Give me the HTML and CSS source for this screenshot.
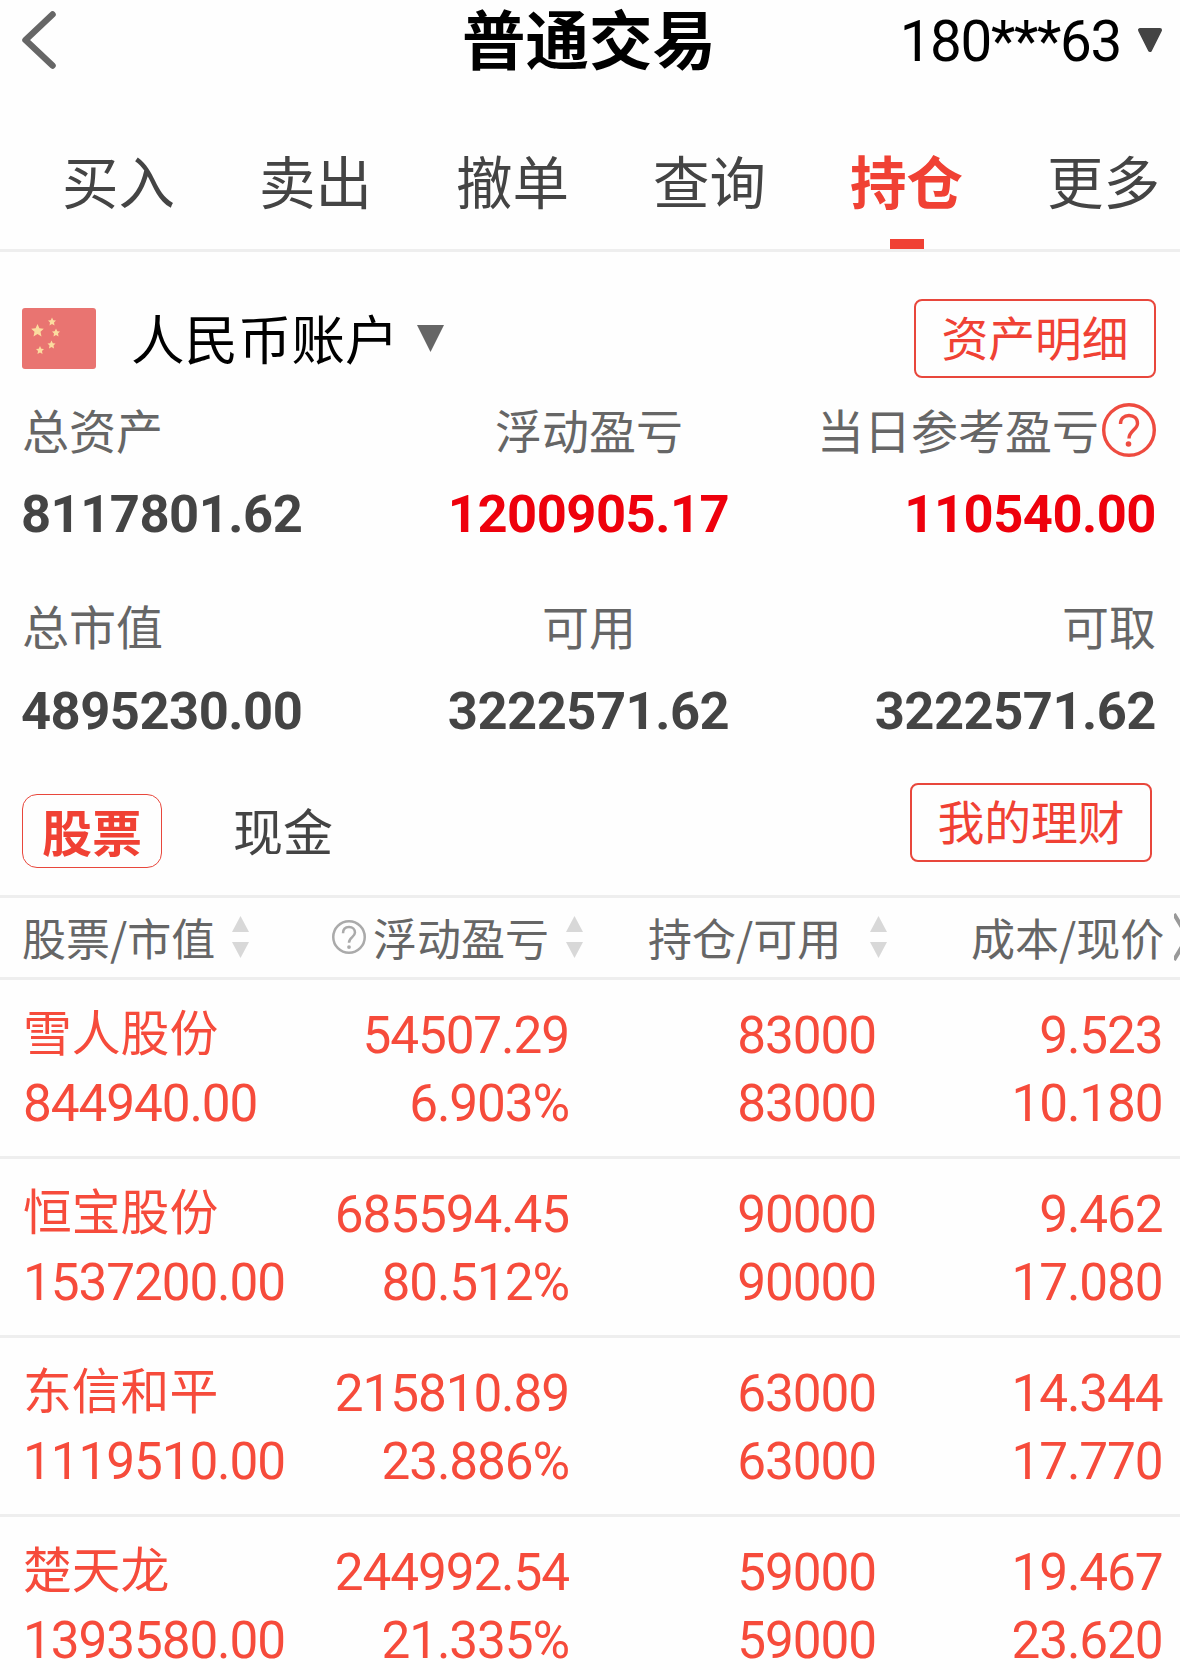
FILE: index.html
```html
<!DOCTYPE html>
<html lang="zh-CN">
<head>
<meta charset="utf-8">
<title>普通交易</title>
<link rel="stylesheet" href="styles.css">
</head>
<body>
<svg class="defs" width="0" height="0" aria-hidden="true">
  <symbol id="sort" viewBox="0 0 17 42"><path d="M8.500 0 17 16H0ZM0 26H17L8.500 42Z"/></symbol>
</svg>
<div class="app">
  <header class="topbar">
    <svg class="back" viewBox="0 0 36 60"><path d="M31.500 4.500 4.500 30 31.500 55.500"/></svg>
    <h1 class="title">普通交易</h1>
    <div class="user"><span>180***63</span><svg class="user-arrow" viewBox="0 0 26 26"><path d="M3 3H23L13 23Z"/></svg></div>
  </header>
  <nav class="tabs">
    <a class="tab">买入</a>
    <a class="tab">卖出</a>
    <a class="tab">撤单</a>
    <a class="tab">查询</a>
    <a class="tab active">持仓</a>
    <a class="tab">更多</a>
  </nav>

  <section class="account">
    <div class="account-head">
      <svg class="flag" viewBox="0 0 74 61">
        <rect width="74" height="61" rx="3" fill="#e97471"/>
        <g fill="#fbdc9f">
          <path d="M15.500 16 17.400 20.300 21.800 20.700 18.500 23.800 19.500 28.500 15.500 26 11.500 28.500 12.500 23.800 9.200 20.700 13.600 20.300Z"/>
          <path id="star" d="M30 9.500 31.300 12.200 34 12.600 32 14.600 32.500 17.500 30 16 27.500 17.500 28 14.600 26 12.600 28.700 12.200Z"/>
          <use href="#star" x="4" y="11"/>
          <use href="#star" x="-.5" y="23"/>
          <use href="#star" x="-12" y="28.500"/>
        </g>
      </svg>
      <span class="account-name">人民币账户</span>
      <svg class="account-arrow" viewBox="0 0 27 27"><path d="M0 0H27L13.500 27Z"/></svg>
      <a class="button">资产明细</a>
    </div>
    <div class="summary">
      <div class="stat"><div class="label">总资产</div><div class="value">8117801.62</div></div>
      <div class="stat"><div class="label">浮动盈亏</div><div class="value up">1200905.17</div></div>
      <div class="stat"><div class="label">当日参考盈亏<svg class="help" viewBox="0 0 54 54"><circle cx="27" cy="27" r="25.300"/><path d="M18.500 21c0-5.500 3.500-8.500 8.500-8.500s8.500 3 8.500 8c0 6-8.500 7.500-8.500 15"/><circle class="point" cx="26.500" cy="41" r="2.800"/></svg></div><div class="value up">110540.00</div></div>
      <div class="stat"><div class="label">总市值</div><div class="value">4895230.00</div></div>
      <div class="stat"><div class="label">可用</div><div class="value">3222571.62</div></div>
      <div class="stat"><div class="label">可取</div><div class="value">3222571.62</div></div>
    </div>
    <div class="kinds">
      <a class="kind selected">股票</a>
      <a class="kind">现金</a>
      <a class="button">我的理财</a>
    </div>
  </section>

  <section class="holdings">
    <div class="columns">
      <div class="column stock">股票/市值<svg class="sort"><use href="#sort"/></svg></div>
      <div class="column profit"><svg class="hint" viewBox="0 0 54 54"><circle cx="27" cy="27" r="25"/><path d="M17.500 21c0-6 3.500-10 9.500-10s9.500 4 9.500 9c0 7-9.500 7.500-9.500 16"/><circle class="point" cx="27" cy="43" r="3"/></svg>浮动盈亏<svg class="sort"><use href="#sort"/></svg></div>
      <div class="column amount">持仓/可用<svg class="sort"><use href="#sort"/></svg></div>
      <div class="column price">成本/现价<svg class="more" viewBox="0 0 6 50"><path d="M0 2 9 17M0 48 9 33"/></svg></div>
    </div>
    <div class="row">
      <div class="cell"><b class="name">雪人股份</b><span>844940.00</span></div>
      <div class="cell"><span>54507.29</span><span>6.903%</span></div>
      <div class="cell"><span>83000</span><span>83000</span></div>
      <div class="cell"><span>9.523</span><span>10.180</span></div>
    </div>
    <div class="row">
      <div class="cell"><b class="name">恒宝股份</b><span>1537200.00</span></div>
      <div class="cell"><span>685594.45</span><span>80.512%</span></div>
      <div class="cell"><span>90000</span><span>90000</span></div>
      <div class="cell"><span>9.462</span><span>17.080</span></div>
    </div>
    <div class="row">
      <div class="cell"><b class="name">东信和平</b><span>1119510.00</span></div>
      <div class="cell"><span>215810.89</span><span>23.886%</span></div>
      <div class="cell"><span>63000</span><span>63000</span></div>
      <div class="cell"><span>14.344</span><span>17.770</span></div>
    </div>
    <div class="row">
      <div class="cell"><b class="name">楚天龙</b><span>1393580.00</span></div>
      <div class="cell"><span>244992.54</span><span>21.335%</span></div>
      <div class="cell"><span>59000</span><span>59000</span></div>
      <div class="cell"><span>19.467</span><span>23.620</span></div>
    </div>
  </section>
</div>
</body>
</html>
```
FILE: styles.css
```css
* { box-sizing: border-box; }
body { margin: 0; background: #fefefe; }
svg { display: block; flex: none; }
.defs { position: absolute; }
.app {
  width: 1180px;
  height: 1670px;
  overflow: hidden;
  font-family: "Noto Sans CJK SC", sans-serif;
  color: #444;
  white-space: nowrap;
}

.topbar {
  display: grid;
  grid-template-columns: 437px 262px 1fr;
  align-items: center;
  height: 80px;
  padding: 0 17px 0 21px;
}
.back { width: 36px; height: 60px; fill: none; stroke: #666; stroke-width: 6.5; stroke-linecap: round; stroke-linejoin: round; }
.title { margin: 0; align-self: start; font-size: 63.5px; line-height: 73px; font-weight: 700; color: #000; text-align: center; }
.user { display: flex; align-items: center; justify-content: flex-end; gap: 16px; font: 56.5px/76px Roboto, sans-serif; letter-spacing: -1.3px; color: #000; }
.user span { padding-top: 4px; }
.user-arrow { width: 26px; height: 26px; fill: #444; stroke: #444; stroke-width: 4; stroke-linejoin: round; }

.tabs { display: flex; height: 172px; padding-left: 20px; border-bottom: 3px solid #eee; }
.tab { flex: 0 0 197px; display: flex; flex-direction: column; align-items: center; justify-content: space-between; padding-top: 58px; font-size: 56.5px; line-height: 82px; }
.tab.active { color: #f04134; font-weight: 700; }
.tab.active::after { content: ""; width: 34px; height: 10px; background: #f04134; }

.account { height: 643px; padding: 46px 24px 0 22px; }
.account-head { display: flex; align-items: center; height: 80px; }
.flag { width: 74px; height: 61px; }
.account-name { margin: 0 18px 2px 35px; font-size: 53.5px; line-height: 70px; color: #000; }
.account-arrow { width: 27px; height: 27px; fill: #666; }
.button {
  width: 242px;
  height: 79px;
  margin-left: auto;
  border: 2px solid #e8473c;
  border-radius: 8px;
  font-size: 46.8px;
  line-height: 70px;
  text-align: center;
  color: #f04134;
}
.summary { display: grid; grid-template-columns: 1fr 1fr 1fr; grid-auto-rows: 196.5px; }
.stat { display: flex; flex-direction: column; align-items: center; }
.stat:nth-child(3n + 1) { align-items: flex-start; }
.stat:nth-child(3n) { align-items: flex-end; }
.label { display: flex; align-items: center; height: 101px; gap: 3px; font-size: 47px; line-height: 96px; color: #666; }
.value { font: 700 52.5px/70px Roboto, sans-serif; letter-spacing: -0.5px; margin-left: -1px; }
.value.up { color: #ee000c; }
.help { width: 54px; height: 54px; margin-top: 3px; fill: none; stroke: #ee4b40; stroke-width: 3.4; }
.point { fill: currentColor; stroke: none; }
.help .point { fill: #ee4b40; }
.kinds { display: flex; align-items: flex-start; gap: 71px; padding-right: 4px; margin-top: 12px; }
.kind { margin-top: 11px; font-size: 50px; line-height: 71px; }
.kind.selected { width: 140px; height: 74px; border: 1px solid #e8473c; border-radius: 15px; text-align: center; font-weight: 700; color: #f04134; }

.columns {
  display: grid;
  grid-template-columns: 332px 316px 323px 209px;
  height: 85px;
  border: solid #eee;
  border-width: 3px 0;
  font-size: 44px;
  line-height: 73px;
  color: #666;
}
.column { display: flex; align-items: center; padding-bottom: 1px; }
.stock { padding-left: 22px; }
.sort { width: 17px; height: 42px; fill: #d8d8d8; margin-left: 17px; }
.amount .sort { margin-left: 29px; }
.hint { width: 34px; height: 34px; margin-right: 7px; fill: none; stroke: #aaa; stroke-width: 4; color: #aaa; }
.more { width: 6px; height: 50px; margin-left: auto; fill: none; stroke: #999; stroke-width: 4; }

.row {
  display: grid;
  grid-template-columns: 306px 238px 307px 286.5px;
  height: 179px;
  padding: 22px 0 0 24px;
  border-bottom: 3px solid #eee;
  font: 51.3px/68px Roboto, sans-serif;
  letter-spacing: -1.1px;
  color: #f64b3b;
}
.cell { display: flex; flex-direction: column; align-items: flex-end; }
.cell:first-child { align-items: flex-start; }
.cell span { margin: 0 -1px; }
.name { height: 68px; font: 400 48.8px/56px "Noto Sans CJK SC", sans-serif; letter-spacing: 0; margin-left: -1px; }
```
